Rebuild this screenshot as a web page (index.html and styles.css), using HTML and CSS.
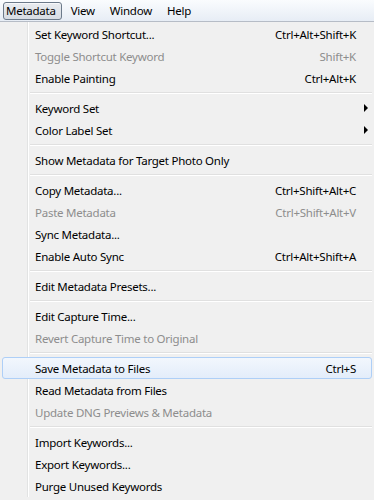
FILE: index.html
```html
<!DOCTYPE html>
<html lang="en">
<head>
  <meta charset="UTF-8">
  <title>Metadata Menu</title>
  <link rel="stylesheet" href="styles.css">
</head>
<body>
  <!-- Menu Bar -->
  <div class="menubar">
    <span class="menu-title open">Metadata</span>
    <span class="menu-title">View</span>
    <span class="menu-title">Window</span>
    <span class="menu-title">Help</span>
  </div>

  <!-- Dropdown -->
  <div class="dropdown">
    <div class="item"><span>Set Keyword Shortcut...</span><span class="keys">Ctrl+Alt+Shift+K</span></div>
    <div class="item disabled"><span>Toggle Shortcut Keyword</span><span class="keys">Shift+K</span></div>
    <div class="item"><span>Enable Painting</span><span class="keys">Ctrl+Alt+K</span></div>
    <div class="sep"></div>
    <div class="item"><span>Keyword Set</span><span class="arrow"></span></div>
    <div class="item"><span>Color Label Set</span><span class="arrow"></span></div>
    <div class="sep"></div>
    <div class="item"><span>Show Metadata for Target Photo Only</span></div>
    <div class="sep"></div>
    <div class="item"><span>Copy Metadata...</span><span class="keys">Ctrl+Shift+Alt+C</span></div>
    <div class="item disabled"><span>Paste Metadata</span><span class="keys">Ctrl+Shift+Alt+V</span></div>
    <div class="item"><span>Sync Metadata...</span></div>
    <div class="item"><span>Enable Auto Sync</span><span class="keys">Ctrl+Alt+Shift+A</span></div>
    <div class="sep"></div>
    <div class="item"><span>Edit Metadata Presets...</span></div>
    <div class="sep"></div>
    <div class="item"><span>Edit Capture Time...</span></div>
    <div class="item disabled"><span>Revert Capture Time to Original</span></div>
    <div class="sep"></div>
    <div class="item active"><span>Save Metadata to Files</span><span class="keys">Ctrl+S</span></div>
    <div class="item"><span>Read Metadata from Files</span></div>
    <div class="item disabled"><span>Update DNG Previews &amp; Metadata</span></div>
    <div class="sep"></div>
    <div class="item"><span>Import Keywords...</span></div>
    <div class="item"><span>Export Keywords...</span></div>
    <div class="item"><span>Purge Unused Keywords</span></div>
  </div>
</body>
</html>
```

FILE: styles.css
```css
/* Reset */
* {
  box-sizing: border-box;
  margin: 0;
  padding: 0;
}
body {
  font-family: "Noto Sans", "Open Sans", sans-serif;
  font-size: 11.5px;
  letter-spacing: -0.25px;
  color: #000;
  background-color: #f0f0f0;
  width: 374px;
  height: 500px;
  overflow: hidden;
}
/* Menu Bar */
.menubar {
  height: 22px;
  display: flex;
  align-items: center;
  padding-left: 3px;
  background: linear-gradient(#fafcfe, #e7edf5);
  border-bottom: 1px solid #b6bcc6;
}
.menu-title {
  height: 18px;
  line-height: 16px;
  padding: 0 5px 0 2px;
  margin-right: 6px;
  border: 1px solid transparent;
  border-radius: 3px;
}
.menu-title.open {
  border-color: #6c7a8a;
  background: linear-gradient(#e9ecf0, #d7dce3);
  box-shadow: inset 0 1px 0 #f7f8fa;
}
/* Dropdown */
.dropdown {
  background-color: #f0f0f0;
  padding: 1px 2px 0 2px;
  background-image: linear-gradient(90deg, transparent 27px, #e2e3e3 27px, #e2e3e3 28px, #fff 28px, #fff 29px, transparent 29px);
}
.item {
  display: flex;
  justify-content: space-between;
  align-items: center;
  height: 22px;
  padding: 0 15px 0 32px;
  border: 1px solid transparent;
  border-radius: 3px;
  white-space: nowrap;
}
.item.disabled {
  color: #8d8d8d;
}
.item.active {
  border-color: #aecff7;
  background: linear-gradient(#f2f7fd, #e3edfa);
}
.arrow {
  width: 0;
  height: 0;
  margin-right: -12px;
  border-top: 4px solid transparent;
  border-bottom: 4px solid transparent;
  border-left: 4px solid #000;
}
.sep {
  height: 8px;
  margin-left: 28px;
  background: linear-gradient(transparent 3px, #e0e0e0 3px, #e0e0e0 4px, #fff 4px, #fff 5px, transparent 5px);
}
```
